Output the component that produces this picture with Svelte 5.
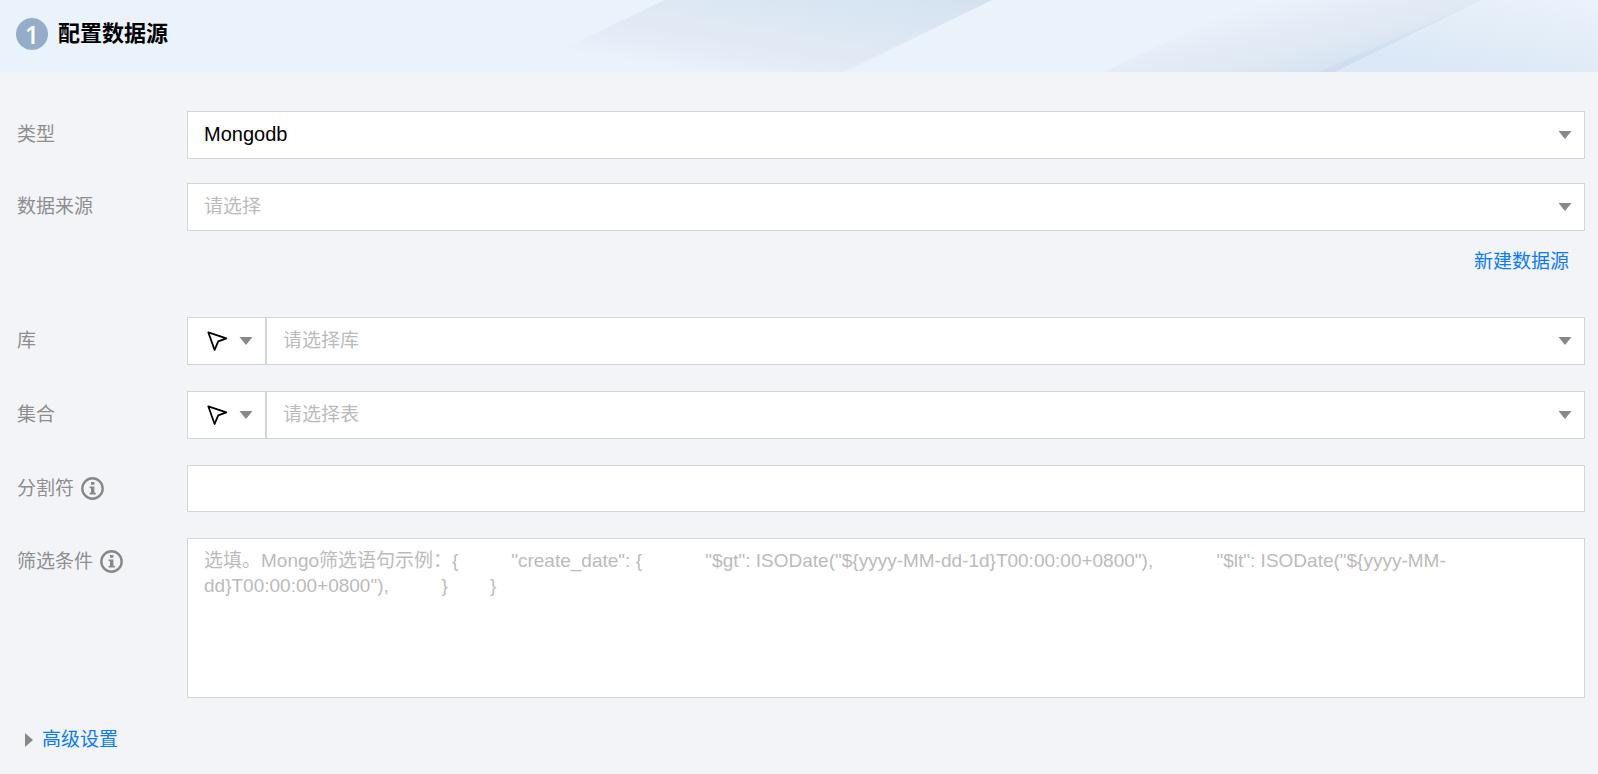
<script lang="ts">
  const placeholder =
    "选填。Mongo筛选语句示例：{" +
    " ".repeat(10) +
    '"create_date": {' +
    " ".repeat(12) +
    '"$gt": ISODate("${yyyy-MM-dd-1d}T00:00:00+0800"),' +
    " ".repeat(12) +
    '"$lt": ISODate("${yyyy-MM-dd}T00:00:00+0800"),' +
    " ".repeat(10) +
    "}" +
    " ".repeat(8) +
    "}";

  const pickers = [
    { id: "database", label: "库", hint: "请选择库" },
    { id: "collection", label: "集合", hint: "请选择表" },
  ];

  let type = $state("Mongodb");
  let source = $state("");
  let picked = $state<Record<string, string>>({ database: "", collection: "" });
  let separator = $state("");
  let filter = $state("");
  let advancedOpen = $state(false);
</script>

{#snippet caret()}
  <svg class="caret" width="14" height="8" viewBox="0 0 14 8" aria-hidden="true">
    <path d="M0.5 0h13L7 8z" fill="#888" />
  </svg>
{/snippet}

{#snippet info()}
  <svg class="info" width="23" height="23" viewBox="0 0 23 23" aria-hidden="true">
    <circle cx="11.5" cy="11.5" r="10.2" fill="none" stroke="#888" stroke-width="2.4" />
    <path d="M10 5h3.4v2.8H10zM8.6 9.6h4.8v6.2h1.4v1.7H8.6v-1.7H10v-4.5H8.6z" fill="#888" />
  </svg>
{/snippet}

<section class="panel">
  <header class="header">
    <svg class="backdrop" viewBox="0 0 1598 72" preserveAspectRatio="none" aria-hidden="true">
      <defs>
        <linearGradient id="band-left" gradientUnits="userSpaceOnUse" x1="790" y1="-40" x2="768" y2="86">
          <stop offset="0" stop-color="#d3e1f0" />
          <stop offset="0.4" stop-color="#dbe7f3" />
          <stop offset="0.6" stop-color="#e0e9f4" />
          <stop offset="0.72" stop-color="#e3e9f5" />
          <stop offset="1" stop-color="#ebf2fb" />
        </linearGradient>
        <linearGradient id="band-middle" gradientUnits="userSpaceOnUse" x1="1240" y1="5" x2="1265" y2="105">
          <stop offset="0" stop-color="#ebf3fc" />
          <stop offset="0.4" stop-color="#e3eaf5" />
          <stop offset="0.55" stop-color="#dfe9f4" />
          <stop offset="1" stop-color="#d2dff0" />
        </linearGradient>
        <linearGradient id="band-edge" x1="0" y1="0" x2="0" y2="1">
          <stop offset="0" stop-color="#dce7f2" />
          <stop offset="1" stop-color="#cddcf0" />
        </linearGradient>
        <linearGradient id="band-right" gradientUnits="userSpaceOnUse" x1="1510" y1="-10" x2="1495" y2="76">
          <stop offset="0" stop-color="#eaf2fc" />
          <stop offset="0.5" stop-color="#e3edf7" />
          <stop offset="1" stop-color="#dbe8f7" />
        </linearGradient>
      </defs>
      <path d="M665 0H992L844 72H515z" fill="url(#band-left)" />
      <path d="M1256 0H1482L1335 72H1104z" fill="url(#band-middle)" />
      <path d="M1482 0L1335 72H1319z" fill="url(#band-edge)" />
      <path d="M1482 0H1598V72H1335z" fill="url(#band-right)" />
    </svg>
    <span class="step">1</span>
    <h1>配置数据源</h1>
  </header>

  <form class="form" onsubmit={(e) => e.preventDefault()}>
    <div class="group">
      <div class="row">
        <label for="type">类型</label>
        <div class="select">
          <select id="type" class="chosen" bind:value={type}>
            <option>Mongodb</option>
          </select>
          {@render caret()}
        </div>
      </div>

      <div class="row">
        <label for="source">数据来源</label>
        <div class="select">
          <select id="source" bind:value={source}>
            <option value="">请选择</option>
          </select>
          {@render caret()}
        </div>
      </div>
    </div>

    <div class="create">
      <a href="#new">新建数据源</a>
    </div>

    <div class="group loose">
      {#each pickers as picker}
        <div class="row">
          <label for={picker.id}>{picker.label}</label>
          <div class="combo">
            <button type="button" class="mode" aria-label="选择方式">
              <svg width="21" height="21" viewBox="0 0 21 21" aria-hidden="true">
                <path
                  d="M1.3 1.3L19.4 7.3L11.2 10.3L7.6 19z"
                  fill="none"
                  stroke="#000"
                  stroke-width="1.8"
                  stroke-linejoin="round"
                />
              </svg>
              {@render caret()}
            </button>
            <div class="select">
              <select id={picker.id} bind:value={picked[picker.id]}>
                <option value="">{picker.hint}</option>
              </select>
              {@render caret()}
            </div>
          </div>
        </div>
      {/each}

      <div class="row">
        <label for="separator">分割符 {@render info()}</label>
        <input id="separator" type="text" bind:value={separator} />
      </div>

      <div class="row">
        <label for="filter">筛选条件 {@render info()}</label>
        <textarea id="filter" {placeholder} bind:value={filter}></textarea>
      </div>
    </div>

    <button
      type="button"
      class="advanced"
      aria-expanded={advancedOpen}
      onclick={() => (advancedOpen = !advancedOpen)}
    >
      <svg width="8" height="14" viewBox="0 0 8 14" aria-hidden="true">
        <path d="M0 0v14l8-7z" fill="#888" />
      </svg>
      高级设置
    </button>
  </form>
</section>

<style>
  :global(body) {
    background: #f2f4f8;
  }

  .panel,
  select,
  input,
  textarea,
  button {
    font-family: "Liberation Sans", "Noto Sans CJK SC", sans-serif;
    font-size: 19px;
    line-height: 25px;
  }

  .header {
    position: relative;
    display: flex;
    align-items: center;
    gap: 10px;
    height: 72px;
    padding: 0 16px 4px;
    box-sizing: border-box;
    background: #eaf2fc;
  }

  .backdrop {
    position: absolute;
    inset: 0;
    width: 100%;
    height: 100%;
  }

  .step {
    position: relative;
    width: 32px;
    height: 32px;
    border-radius: 50%;
    background: #94aec9;
    color: #fff;
    font-family: "Open Sans", sans-serif;
    font-size: 25px;
    font-weight: 600;
    line-height: 32px;
    text-align: center;
  }

  h1 {
    position: relative;
    margin: 0;
    color: #000;
    font-size: 22px;
    font-weight: 700;
    line-height: 32px;
  }

  .form {
    padding: 39px 13px 20px 17px;
  }

  .group {
    display: flex;
    flex-direction: column;
    gap: 24px;
  }

  .loose {
    gap: 26px;
  }

  .row {
    display: grid;
    grid-template-columns: 170px 1fr;
    align-items: start;
  }

  label {
    display: flex;
    align-items: center;
    gap: 7px;
    height: 46px;
    color: #8e8e8e;
  }

  select,
  input,
  textarea,
  .mode {
    box-sizing: border-box;
    border: 1px solid #cfd5de;
    border-radius: 0;
    outline: none;
    background: #fff;
  }

  select,
  input,
  textarea {
    width: 100%;
    margin: 0;
    padding: 0 16px;
  }

  .select {
    display: grid;
    grid-template-columns: 1fr;
    align-items: center;
  }

  .select > :global(*) {
    grid-area: 1 / 1;
  }

  .select .caret {
    justify-self: end;
    margin: 0 13px 1px 0;
    pointer-events: none;
  }

  select {
    height: 48px;
    padding-bottom: 2px;
    appearance: none;
    color: #bbb;
    cursor: pointer;
  }

  .chosen {
    color: #000;
    font-size: 20px;
  }

  .combo {
    display: grid;
    grid-template-columns: 79px 1fr;
  }

  .mode {
    display: flex;
    align-items: center;
    justify-content: space-between;
    height: 48px;
    padding: 0 12px 0 19px;
    cursor: pointer;
  }

  input {
    height: 47px;
  }

  textarea {
    display: block;
    height: 160px;
    padding: 9px 16px;
    resize: none;
  }

  textarea::placeholder {
    color: #bbb;
  }

  .create {
    margin: 18px 16px 42px;
    text-align: right;
  }

  a,
  .advanced {
    color: #0a7aff;
    text-decoration: none;
  }

  .create a {
    display: inline-block;
    line-height: 26px;
    vertical-align: top;
  }

  .advanced {
    display: flex;
    align-items: center;
    gap: 9px;
    margin: 29px 0 0;
    padding: 0 8px;
    border: 0;
    background: none;
    cursor: pointer;
  }

  .advanced[aria-expanded="true"] svg {
    transform: rotate(90deg);
  }
</style>
